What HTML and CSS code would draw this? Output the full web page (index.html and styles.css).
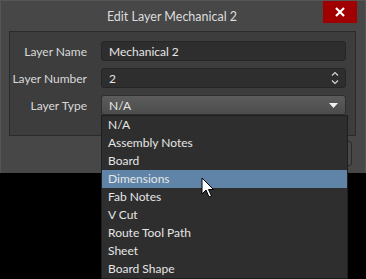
FILE: index.html
```html
<!DOCTYPE html>
<html lang="en">
<head>
    <meta charset="UTF-8">
    <meta name="viewport" content="width=device-width, initial-scale=1.0">
    <title>Edit Layer Mechanical 2</title>
    <link rel="stylesheet" href="styles.css">
</head>
<body>

<div class="dialog">
    <div class="titlebar">
        <div class="title">Edit Layer Mechanical 2</div>
        <div class="close-btn">
            <svg width="12" height="12" viewBox="0 0 12 12">
                <path d="M2 2 L10 10 M10 2 L2 10" stroke="#fff" stroke-width="2.2" fill="none"/>
            </svg>
        </div>
    </div>

    <div class="group">
        <div class="row">
            <label class="field-label">Layer Name</label>
            <div class="field">Mechanical 2</div>
        </div>
        <div class="row">
            <label class="field-label">Layer Number</label>
            <div class="field spin">
                <span>2</span>
                <svg class="spin-icon" width="8" height="16" viewBox="0 0 8 16">
                    <path d="M1 5.5 L4 2.5 L7 5.5 M1 10.5 L4 13.5 L7 10.5" stroke="#d6d6d6" stroke-width="1.2" fill="none"/>
                </svg>
            </div>
        </div>
        <div class="row">
            <label class="field-label">Layer Type</label>
            <div class="field combo">
                <span>N/A</span>
                <svg width="9" height="5" viewBox="0 0 9 5">
                    <path d="M0 0 L9 0 L4.5 5 Z" fill="#f0f0f0"/>
                </svg>
            </div>
        </div>
    </div>

    <div class="footer">
        <div class="btn"></div>
    </div>
</div>

<ul class="dropdown">
    <li>N/A</li>
    <li>Assembly Notes</li>
    <li>Board</li>
    <li class="active">Dimensions</li>
    <li>Fab Notes</li>
    <li>V Cut</li>
    <li>Route Tool Path</li>
    <li>Sheet</li>
    <li>Board Shape</li>
</ul>

<svg class="cursor" width="14" height="22" viewBox="0 0 14 22">
    <path d="M1 1 L1 17 L5 13 L8 20 L10.5 19 L7.5 12.5 L12.5 12.5 Z" fill="#fff" stroke="#000" stroke-width="1"/>
</svg>

</body>
</html>
```

FILE: styles.css
```css
html, body {
    height: 279px;
}
body {
    position: relative;
    margin: 0;
    background: #000;
    font-family: Lato, "Open Sans", sans-serif;
    font-size: 12px;
    overflow: hidden;
}
.dialog {
    width: 366px;
    height: 173px;
    box-sizing: border-box;
    background: #474747;
    border: 1px solid #555;
    border-bottom: none;
}
.titlebar {
    display: flex;
    align-items: flex-start;
    height: 30px;
}
.title {
    flex: 1;
    text-align: center;
    color: #dcdcdc;
    padding: 8px 0 0 20px;
    font-size: 12.5px;
}
.close-btn {
    width: 34px;
    height: 22px;
    margin-right: 8px;
    background: #a00000;
    display: flex;
    align-items: center;
    justify-content: center;
}
.group {
    margin: 0 9px 0 8px;
    height: 94px;
    background: #3d3d3d;
    border: 1px solid #2b2b2b;
    padding: 9px 9px 0 0;
}
.row {
    display: flex;
    align-items: center;
    height: 20px;
    margin-bottom: 7px;
}
.field-label {
    width: 77px;
    text-align: right;
    color: #dadada;
    margin-right: 14px;
    white-space: nowrap;
}
.field {
    flex: 1;
    height: 20px;
    box-sizing: border-box;
    background: #2e2e2e;
    border: 1px solid #262626;
    border-radius: 3px;
    color: #e6e6e6;
    padding: 0 7px;
    display: flex;
    align-items: center;
    justify-content: space-between;
}
.spin-icon {
    margin-right: -1px;
}
.combo {
    background: linear-gradient(#5c5c5c, #4c4c4c);
    border-color: #2e2e2e;
}
.footer {
    display: flex;
    justify-content: flex-end;
    padding: 5px 13px 0 0;
}
.btn {
    width: 80px;
    height: 25px;
    box-sizing: border-box;
    border: 1px solid #2a2a2a;
    border-radius: 3px;
    background: #4a4a4a;
}
.dropdown {
    position: absolute;
    left: 101px;
    top: 115px;
    width: 245px;
    margin: 0;
    padding: 0;
    list-style: none;
    background: #2e2e2e;
    border: 1px solid #1e1e1e;
    color: #e6e6e6;
}
.dropdown li {
    height: 18px;
    line-height: 18px;
    padding-left: 6px;
}
.dropdown li.active {
    background: #5f84a7;
}
.cursor {
    position: absolute;
    left: 201px;
    top: 177px;
}
```
